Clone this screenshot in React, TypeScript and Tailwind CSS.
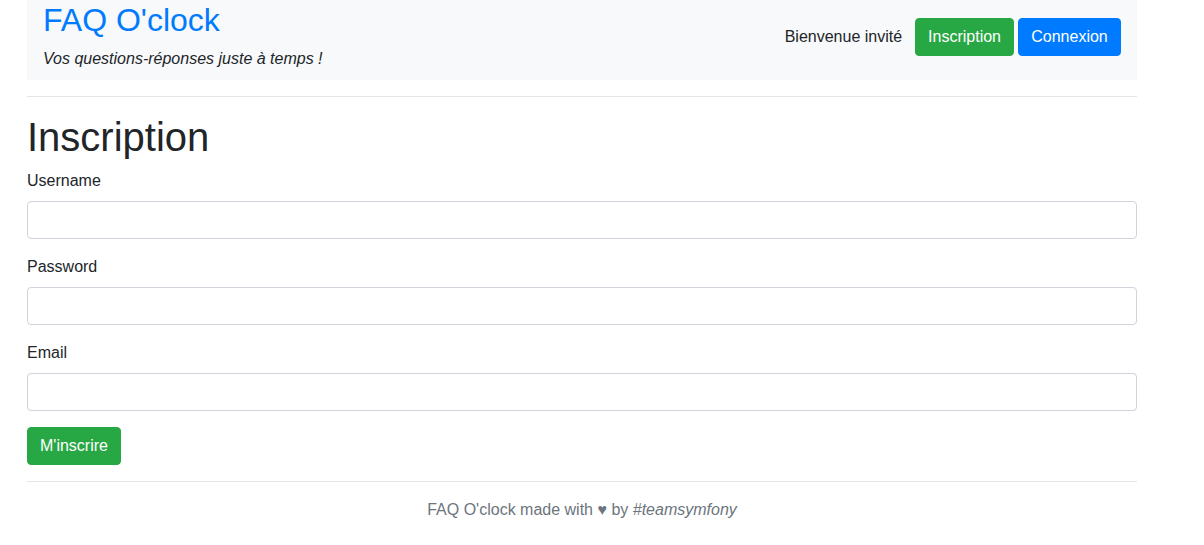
export default function App() {
  const font = { fontFamily: '"Liberation Sans", Arial, sans-serif' };
  const Field = ({ label }: { label: string }) => (
    <div className="mb-4">
      <label className="mb-2 block text-[16px] leading-6">{label}</label>
      <input
        type="text"
        className="block h-[38px] w-full rounded-[4px] border border-[#ced4da] bg-white px-3 text-[16px] outline-none"
      />
    </div>
  );
  return (
    <div className="min-h-[545px] bg-white text-[#212529]" style={font}>
      <div className="ml-[12px] w-[1140px] px-[15px]">
        <header className="flex justify-between bg-[#f8f9fa] pb-[9px] pl-4 pr-4 pt-[1px]">
          <div>
            <h2 className="mb-2 text-[32px] leading-[38px] text-[#007bff]">FAQ O'clock</h2>
            <p className="text-[16px] italic leading-6">Vos questions-réponses juste à temps !</p>
          </div>
          <div className="flex items-center self-start pt-[17px]">
            <span className="mr-[13px] text-[16px] leading-6">Bienvenue invité</span>
            <button className="h-[38px] rounded-[4px] border border-[#28a745] bg-[#28a745] px-3 text-[16px] leading-6 text-white">
              Inscription
            </button>
            <button className="ml-1 h-[38px] w-[103px] rounded-[4px] border border-[#007bff] bg-[#007bff] px-3 text-[16px] leading-6 text-white">
              Connexion
            </button>
          </div>
        </header>
        <hr className="my-4 border-t border-[rgba(0,0,0,0.1)]" />
        <h1 className="mb-2 text-[40px] leading-[48px]">Inscription</h1>
        <form onSubmit={(e) => e.preventDefault()}>
          <Field label="Username" />
          <Field label="Password" />
          <Field label="Email" />
          <button className="h-[38px] rounded-[4px] border border-[#28a745] bg-[#28a745] px-3 text-[16px] leading-6 text-white">
            M'inscrire
          </button>
        </form>
        <hr className="my-4 border-t border-[rgba(0,0,0,0.1)]" />
        <p className="text-center text-[16px] leading-6 text-[#6c757d]">
          FAQ O'clock made with ♥ by <em>#teamsymfony</em>
        </p>
      </div>
    </div>
  );
}
